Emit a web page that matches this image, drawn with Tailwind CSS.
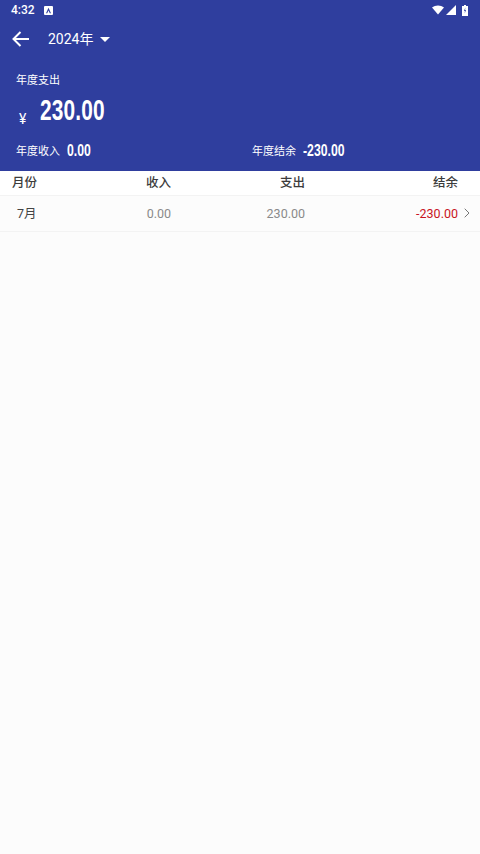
<!DOCTYPE html>
<html lang="zh">
<head>
    <meta charset="UTF-8">
    <meta name="viewport" content="width=device-width, initial-scale=1.0">
    <title>年度账单</title>
    <script src="https://cdn.jsdelivr.net/npm/@tailwindcss/browser@4"></script>
</head>
<body class="bg-[#fcfcfc] w-[480px] h-[854px] overflow-hidden font-['Roboto','Noto_Sans_CJK_SC',sans-serif]">
    <!-- Header -->
    <div class="bg-[#2f3e9e] h-[171px] text-white flex flex-col">
        <!-- Status bar -->
        <div class="h-[20px] flex items-center pl-[11px] pr-[12px] text-[12px] font-medium">
            <span class="w-[33px]">4:32</span>
            <svg class="w-[9px] h-[9px]" viewBox="0 0 9 9"><rect width="9" height="9" rx="1" fill="#fff"/><path d="M2 7.2 4.5 1.8 7 7.2H5.8L4.5 4.4 3.2 7.2Z" fill="#2f3e9e"/></svg>
            <div class="ml-auto flex items-center">
                <svg class="w-[12px] h-[10px]" viewBox="0 0 13 10"><path d="M0 2.2C3.6-.7 9.4-.7 13 2.2L6.5 10Z" fill="#fff"/></svg>
                <svg class="ml-[2px] w-[10px] h-[10px]" viewBox="0 0 10 10"><path d="M10 0V10H0Z" fill="#fff"/></svg>
                <svg class="ml-[6px] w-[6px] h-[11px]" viewBox="0 0 6 11"><path d="M2 0H4V1H6V11H0V1H2Z" fill="#fff"/><path d="M3.3 2.5 2 6H2.9L2.7 8.5 4 5H3.1Z" fill="#2f3e9e"/></svg>
            </div>
        </div>
        <!-- Toolbar -->
        <div class="h-[38px] flex items-center pl-[12px]">
            <svg class="w-[17px] h-[16px]" viewBox="0 0 17 16" fill="none" stroke="#fff" stroke-width="2"><path d="M17 8H2M8.5 1 1.5 8l7 7"/></svg>
            <span class="ml-[19px] text-[14px] leading-none">2024年</span>
            <svg class="ml-[7px] w-[10px] h-[5px]" viewBox="0 0 10 5"><path d="M0 0H10L5 5Z" fill="#fff"/></svg>
        </div>
        <!-- Annual expense -->
        <div class="pl-[16px] mt-[15px] text-[11px] leading-[16px]">年度支出</div>
        <div class="pl-[19px] mt-[3px] flex items-end h-[36px]">
            <span class="w-[21px] text-[14px] leading-none mb-[2px]">¥</span>
            <span class="text-[29px] leading-[36px] font-bold font-['Liberation_Sans'] inline-block origin-left scale-x-[0.72] tracking-[0.2px]">230.00</span>
        </div>
        <!-- Income and balance -->
        <div class="mt-[14px] flex items-center h-[20px] pl-[16px] text-[11px]">
            <div class="w-[236px] flex items-center">
                <span>年度收入</span>
                <span class="ml-[7px] mb-[3px] text-[17px] leading-none font-bold font-['Liberation_Sans'] inline-block origin-left scale-x-[0.72]">0.00</span>
            </div>
            <div class="flex items-center">
                <span>年度结余</span>
                <span class="ml-[7px] mb-[3px] text-[17px] leading-none font-bold font-['Liberation_Sans'] inline-block origin-left scale-x-[0.72]">-230.00</span>
            </div>
        </div>
    </div>

    <!-- Table head -->
    <div class="h-[25px] pt-[1px] flex items-center pl-[12px] text-[12.5px] font-medium text-[#3c3c3c] border-b border-[#f3f3f3] bg-white">
        <span class="w-[99px]">月份</span>
        <span class="w-[60px] text-right">收入</span>
        <span class="w-[134px] text-right">支出</span>
        <span class="w-[153px] text-right">结余</span>
    </div>

    <!-- Month row -->
    <div class="h-[36px] pt-[1px] flex items-center pl-[12px] text-[12.5px] border-b border-[#f3f3f3]">
        <span class="w-[99px] pl-[5px] text-[#444]">7月</span>
        <span class="w-[60px] text-right text-[#8a8a8a]">0.00</span>
        <span class="w-[134px] text-right text-[#8a8a8a]">230.00</span>
        <span class="w-[153px] text-right text-[#c8141e]">-230.00</span>
        <svg class="ml-[6px] mb-[2px] w-[6px] h-[10px]" viewBox="0 0 6 10" fill="none" stroke="#777" stroke-width="1"><path d="M.7.7 5 5 .7 9.3"/></svg>
    </div>
</body>
</html>
